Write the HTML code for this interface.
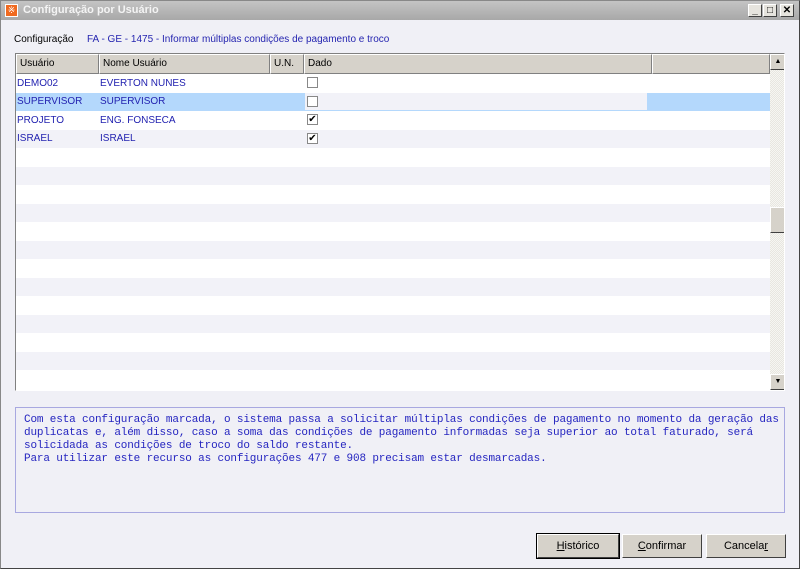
<!DOCTYPE html>
<html><head><meta charset="utf-8"><style>
*{margin:0;padding:0;box-sizing:border-box}
body{width:800px;height:569px;position:relative;background:#f0f0f6;font-family:"Liberation Sans",sans-serif;font-size:10px;overflow:hidden}
.a{position:absolute}
.frame{left:0;top:0;width:800px;height:569px;border:1px solid #888;border-right-color:#444;border-bottom-color:#444}
.title{left:1px;top:1px;width:798px;height:19px;background:linear-gradient(#c4c4c4,#a8a8a8);color:#f4f4f4;font-weight:bold;font-size:11px;line-height:19px;padding-left:22px}
.tb{top:4px;width:14px;height:13px;background:#e6e4de;border:1px solid;border-color:#fff #404040 #404040 #fff;font-size:10px;line-height:11px;text-align:center;color:#000;font-weight:bold}
.tbl{left:15px;top:53px;width:770px;height:338px;border:1px solid;border-color:#808080 #fff #fff #808080;background:#fff;overflow:hidden}
.hd{top:0;height:20px;background:#d6d2ca;border:1px solid;border-color:#fff #808080 #808080 #fff;padding-left:3px;line-height:18px;color:#000}
.row{left:0;width:754px;height:18.5px;line-height:18.5px;color:#2222b0}
.cb{width:11px;height:11px;border:1px solid #888;background:#fff;font-size:10px;line-height:9px;text-align:center;color:#000}
.btn{top:534px;height:24px;background:#d6d2ca;border:1px solid;border-color:#fff #404040 #404040 #fff;text-align:center;line-height:22px;font-size:11px;color:#000}
.mono{font-family:"Liberation Mono",monospace;font-size:11px;letter-spacing:-0.15px;color:#2525c0;line-height:13px;white-space:pre}
</style></head><body>
<div class="a frame"></div>
<div class="a title">Configuração por Usuário</div>
<div class="a" style="left:5px;top:4px;width:13px;height:13px;background:#f06a20;border:1px solid #fff;color:#fff;font-size:9px;line-height:11px;text-align:center">※</div>
<div class="a tb" style="left:748px">_</div>
<div class="a tb" style="left:763px">□</div>
<div class="a tb" style="left:780px">✕</div>
<div class="a" style="left:14px;top:34px;color:#000">Configuração</div>
<div class="a" style="left:87px;top:34px;color:#2525b0">FA - GE - 1475 - Informar múltiplas condições de pagamento e troco</div>
<div class="a tbl">
 <div class="a hd" style="left:0;width:83px">Usuário</div>
 <div class="a hd" style="left:83px;width:171px">Nome Usuário</div>
 <div class="a hd" style="left:254px;width:34px">U.N.</div>
 <div class="a hd" style="left:288px;width:348px">Dado</div>
 <div class="a hd" style="left:636px;width:118px"></div>
 <div class="a row" style="top:20px;background:#fff"></div>
 <div class="a row" style="top:38.5px;background:#b4d8fc"><div class="a" style="left:289px;top:0;width:342px;height:17px;background:#f2f2f8"></div></div>
 <div id="alt"></div>
 <div class="a" style="left:754px;top:0;width:16px;height:338px;background:repeating-conic-gradient(#e8e6e0 0 25%,#f6f6f2 0 50%) 0 0/2px 2px"></div>
 <div class="a" style="left:754px;top:0;width:16px;height:16px;background:#d6d2ca;border:1px solid;border-color:#fff #404040 #404040 #fff;font-size:7px;text-align:center;line-height:13px">▲</div>
 <div class="a" style="left:754px;top:153px;width:16px;height:26px;background:#d6d2ca;border:1px solid;border-color:#fff #404040 #404040 #fff"></div>
 <div class="a" style="left:754px;top:320px;width:16px;height:16px;background:#d6d2ca;border:1px solid;border-color:#fff #404040 #404040 #fff;font-size:7px;text-align:center;line-height:13px">▼</div>
</div>
<script>
var t=document.querySelector('.tbl'),h='';
for(var i=2;i<17;i++){h+='<div class="a row" style="top:'+(20+i*18.5)+'px;background:'+(i%2?'#f2f2f8':'#fff')+'"></div>';}
document.getElementById('alt').outerHTML=h;
</script>
<div class="a" style="left:17px;top:74px;width:760px;color:#2222b0">
 <div class="a" style="left:0;top:4px">DEMO02</div><div class="a" style="left:83px;top:4px">EVERTON NUNES</div><div class="a cb" style="left:290px;top:3px"></div>
 <div class="a" style="left:0;top:22px">SUPERVISOR</div><div class="a" style="left:83px;top:22px">SUPERVISOR</div><div class="a cb" style="left:290px;top:22px"></div>
 <div class="a" style="left:0;top:41px">PROJETO</div><div class="a" style="left:83px;top:41px">ENG. FONSECA</div><div class="a cb" style="left:290px;top:40px">✔</div>
 <div class="a" style="left:0;top:59px">ISRAEL</div><div class="a" style="left:83px;top:59px">ISRAEL</div><div class="a cb" style="left:290px;top:59px">✔</div>
</div>
<div class="a" style="left:15px;top:407px;width:770px;height:106px;border:1px solid #a8a8e0;background:#f0f0f6"></div>
<div class="a mono" style="left:24px;top:414px">Com esta configuração marcada, o sistema passa a solicitar múltiplas condições de pagamento no momento da geração das
duplicatas e, além disso, caso a soma das condições de pagamento informadas seja superior ao total faturado, será
solicidada as condições de troco do saldo restante.
Para utilizar este recurso as configurações 477 e 908 precisam estar desmarcadas.</div>
<div class="a btn" style="left:537px;width:82px;outline:1px solid #000"><u>H</u>istórico</div>
<div class="a btn" style="left:622px;width:80px"><u>C</u>onfirmar</div>
<div class="a btn" style="left:706px;width:80px">Cancela<u>r</u></div>
</body></html>
